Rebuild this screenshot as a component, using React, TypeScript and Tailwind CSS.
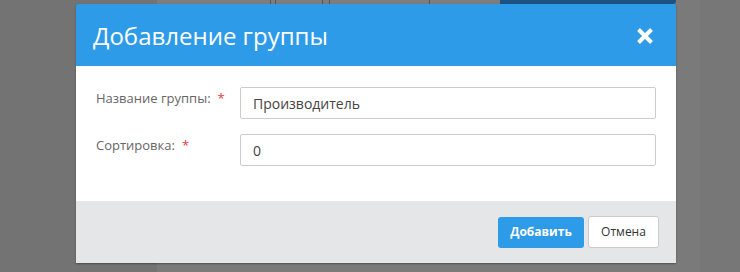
import React from "react";

export default function App() {
  const font = { fontFamily: '"Open Sans", "Noto Sans", sans-serif' };
  return (
    <div className="relative w-[740px] h-[272px] overflow-hidden bg-[#737373]" style={font}>
      {/* dimmed background page */}
      <div className="flex h-full">
        <div className="w-[157px] h-full bg-[#737373]" />
        <div className="w-[543px] h-full bg-[#7a7a7a] flex flex-col">
          <div className="flex h-[4px]">
            <div className="w-[113px] bg-[#7d7d7d]" />
            <div className="w-[6px] border-l border-r border-[#555] bg-[#7d7d7d]" />
            <div className="w-[46px] bg-[#7d7d7d]" />
            <div className="w-[8px] border-l border-r border-[#555] bg-[#7d7d7d]" />
            <div className="w-[100px] border-r border-[#555] bg-[#7d7d7d]" />
            <div className="w-[70px] bg-[#7d7d7d]" />
            <div className="w-[176px] bg-[#1a5384] rounded-br-[3px]" />
          </div>
          <div className="flex-1" />
        </div>
        <div className="flex-1 h-full bg-[#777777]" />
      </div>

      {/* modal */}
      <div className="absolute left-[76px] top-[4px] w-[600px] rounded-t-[3px] overflow-hidden shadow-[0_1px_2px_rgba(0,0,0,0.35)]">
        <div className="h-[62px] bg-[#2d9be8] flex items-center justify-between pl-[17px] pr-[22px]">
          <div className="text-white text-[24px] leading-none pt-[2px]">Добавление группы</div>
          <svg width="18" height="18" viewBox="0 0 18 18" className="mt-[2px]">
            <path d="M2.5 2.5 L15.5 15.5 M15.5 2.5 L2.5 15.5" stroke="white" strokeWidth="4" strokeLinecap="butt" />
          </svg>
        </div>
        <div className="bg-white pt-[21px] pb-[35px] px-[20px] flex flex-col gap-[15px]">
          <div className="flex">
            <div className="w-[144px] text-[13px] text-[#666] leading-[20px] pt-[1px] flex">
              <span>Название группы:</span>
              <span className="text-[#e0403a] ml-[7px]">*</span>
            </div>
            <div className="flex-1 h-[32px] border border-[#cccccc] rounded-[2px] flex items-center px-[12px] text-[14px] text-[#444]">
              Производитель
            </div>
          </div>
          <div className="flex">
            <div className="w-[144px] text-[13px] text-[#666] leading-[20px] pt-[1px] flex">
              <span>Сортировка:</span>
              <span className="text-[#e0403a] ml-[7px]">*</span>
            </div>
            <div className="flex-1 h-[32px] border border-[#cccccc] rounded-[2px] flex items-center px-[12px] text-[14px] text-[#444]">
              0
            </div>
          </div>
        </div>
        <div className="h-[62px] bg-[#e5e6e8] flex items-center justify-end pr-[17px] gap-[4px]">
          <button className="h-[31px] w-[86px] rounded-[3px] bg-[#2d9be8] text-white text-[12px] font-bold" style={font}>
            Добавить
          </button>
          <button className="h-[32px] w-[71px] rounded-[3px] bg-white border border-[#cccccc] text-[#333] text-[12px]" style={font}>
            Отмена
          </button>
        </div>
      </div>
    </div>
  );
}
